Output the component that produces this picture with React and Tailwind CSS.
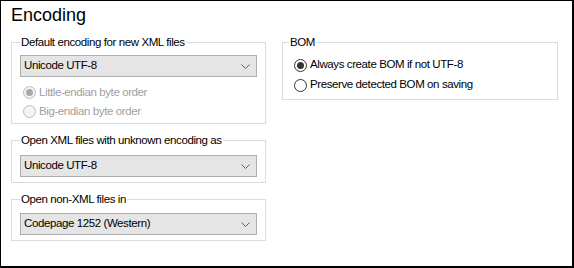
import React from 'react';

function Chevron() {
    return (
        <svg width="9" height="5" viewBox="0 0 9 5" className="shrink-0">
            <path d="M0.5 0.5 L4.5 4.5 L8.5 0.5" fill="none" stroke="#606060" strokeWidth="1" />
        </svg>
    );
}

function Select({ value, className = '' }) {
    return (
        <div className={`flex items-center justify-between h-[22px] border border-[#adadad] bg-[#e5e5e5] pl-[3px] pr-[6px] ${className}`}>
            <span>{value}</span>
            <Chevron />
        </div>
    );
}

function Radio({ label, checked, disabled, className = '' }) {
    return (
        <div className={`flex items-center ${className}`}>
            <span
                className={`flex items-center justify-center w-[13px] h-[13px] rounded-full border ${
                    disabled ? 'border-[#bcbcbc] bg-[#f4f4f4]' : 'border-[#333333] bg-white'
                }`}
            >
                {checked && (
                    <span className={`w-[7px] h-[7px] rounded-full ${disabled ? 'bg-[#a8a8a8]' : 'bg-[#333333]'}`} />
                )}
            </span>
            <span className={`ml-[3px] ${disabled ? 'text-[#a0a0a0]' : 'text-black'}`}>{label}</span>
        </div>
    );
}

function GroupBox({ title, className = '', children }) {
    return (
        <fieldset className={`border border-[#dcdcdc] ${className}`}>
            <legend className="px-[1px] leading-[16px]">{title}</legend>
            {children}
        </fieldset>
    );
}

export default function App() {
    return (
        <div className="w-[574px] h-[268px] bg-white border-l border-t border-r-2 border-b-2 border-black font-['Liberation_Sans',Arial,sans-serif] text-[11.5px] tracking-[-0.4px] text-black">
            <h1 className="pl-[10px] pt-[3px] text-[18px] leading-[22px] tracking-normal">Encoding</h1>

            <div className="flex gap-[16px] pl-[10px] mt-[8px]">
                <div className="flex flex-col gap-[8px] w-[255px]">
                    <GroupBox title="Default encoding for new XML files" className="px-[8px] pb-[2px]">
                        <Select value="Unicode UTF-8" className="mt-[5px]" />
                        <div className="mt-[6px] pl-[3px]">
                            <Radio label="Little-endian byte order" checked disabled className="h-[19px]" />
                            <Radio label="Big-endian byte order" disabled className="h-[19px]" />
                        </div>
                    </GroupBox>

                    <GroupBox title="Open XML files with unknown encoding as" className="px-[8px] pb-[5px]">
                        <Select value="Unicode UTF-8" className="mt-[7px]" />
                    </GroupBox>

                    <GroupBox title="Open non-XML files in" className="px-[8px] pb-[5px]">
                        <Select value="Codepage 1252 (Western)" className="mt-[6px]" />
                    </GroupBox>
                </div>

                <div className="w-[276px]">
                    <GroupBox title="BOM" className="px-[6px] pb-[4px]">
                        <div className="mt-[5px] pl-[5px]">
                            <Radio label="Always create BOM if not UTF-8" checked className="h-[20px]" />
                            <Radio label="Preserve detected BOM on saving" className="h-[20px]" />
                        </div>
                    </GroupBox>
                </div>
            </div>
        </div>
    );
}
